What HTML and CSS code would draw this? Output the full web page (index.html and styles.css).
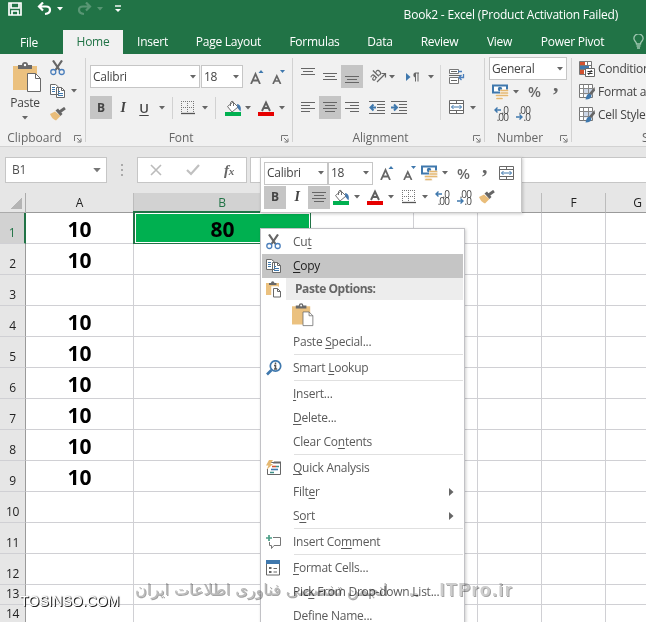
FILE: index.html
```html
<!DOCTYPE html>
<html lang="en">
<head>
<meta charset="utf-8">
<title>Book2 - Excel</title>
<link rel="stylesheet" href="styles.css">
</head>
<body>
<svg class="defs" width="0" height="0" aria-hidden="true">
  <symbol id="dd" viewBox="0 0 6 4"><path d="M0 0h6L3 3.4z" fill="currentColor"/></symbol>
  <symbol id="launch" viewBox="0 0 8 8"><path d="M.5 6V.5H7M3 3l3.5 3.5M7 3.5V7H3.5" fill="none" stroke="#777"/></symbol>
  <symbol id="paste" viewBox="0 0 29 31"><path d="M0 4h24v24H0z" fill="#ebc17f"/><path d="M5 7V3h4a3 3 0 0 1 6 0h4v4z" fill="#696969"/><circle cx="12" cy="3" r="1.2" fill="#fff"/><path d="M14.500 11.500h8l5 5v13h-13z" fill="#fff" stroke="#696969"/><path d="M22.500 11.500v5h5" fill="none" stroke="#696969"/></symbol>
  <symbol id="paste-small" viewBox="0 0 16 17"><path d="M0 2h13v12H0z" fill="#ebc17f"/><path d="M3 4V2h2a1.700 1.700 0 0 1 3.400 0h2v2z" fill="#696969"/><path d="M6.500 6.500h5l3 3v6.500h-8z" fill="#fff" stroke="#fff" stroke-width="2.500"/><path d="M7.500 7.500h4l3 3v5.500h-7z" fill="#fff" stroke="#696969"/><path d="M11.500 7.500v3h3" fill="none" stroke="#696969"/></symbol>
  <symbol id="cut" viewBox="0 0 15 16"><path d="M3 .5 9.500 10M12 .5 5.500 10" stroke="#666" stroke-width="2.200" fill="none"/><circle cx="3.300" cy="12" r="2.500" fill="none" stroke="#4a7ebb" stroke-width="1.300"/><circle cx="11.700" cy="12" r="2.500" fill="none" stroke="#4a7ebb" stroke-width="1.300"/></symbol>
  <symbol id="copy" viewBox="0 0 16 14"><path d="M.5.5h5l3 2.500v7.500h-8zM6.500 3.500h5l3 3v7h-8z" fill="#fff" stroke="#696969"/><path d="M11.500 3.500v3h3" fill="none" stroke="#696969"/><path d="M2 3.500h3M2 5.500h3M2 7.500h3M8 7.500h2M8 9.500h5M8 11.500h5" stroke="#3f78ad"/></symbol>
  <symbol id="brush" viewBox="0 0 16 14"><path d="M5 4.500 10.500 9 6 13.500Q2 12 0 7z" fill="#e9bd7a"/><path d="M5.500 3.500 8 1.500 12.500 7 10.500 9z" fill="#666"/><path d="M9.500 5 15 1" stroke="#666" stroke-width="2.800"/></symbol>
  <symbol id="grid" viewBox="0 0 14 14"><path d="M0 .5h14M0 6.500h14M.5 0v14M6.500 0v14M12.500 0v14" stroke="#777" stroke-dasharray="1 1" fill="none"/><path d="M0 12.500h14" stroke="#555" stroke-width="1.300"/></symbol>
  <symbol id="fill" viewBox="0 0 16 16"><path d="M2.500 6.500 8 2l5 5-6 5z" fill="#fff" stroke="#707070"/><path d="M5.500 6V2.500Q7 0 8.500 2v4" fill="none" stroke="#707070"/><path d="M12 4q5 1 3.500 7.500L12.500 8z" fill="#4478ad"/><path d="M0 12h16v4H0z" fill="#00b050"/></symbol>
  <symbol id="fcolor" viewBox="0 0 16 16"><path d="M4 11 8 2.500 12 11M5.500 8h5" stroke="#606060" stroke-width="1.900" fill="none"/><path d="M0 12h16v4H0z" fill="#e60000"/></symbol>
  <symbol id="alignc" viewBox="0 0 14 11"><path d="M0 .5h14M2 3.500h10M0 6.500h14M2 9.500h10" stroke="#666"/></symbol>
  <symbol id="alignl" viewBox="0 0 14 11"><path d="M0 .5h14M0 3.500h9M0 6.500h14M0 9.500h9" stroke="#666"/></symbol>
  <symbol id="alignr" viewBox="0 0 14 11"><path d="M0 .5h14M5 3.500h9M0 6.500h14M5 9.500h9" stroke="#666"/></symbol>
  <symbol id="valign" viewBox="0 0 14 8"><path d="M0 .5h14M2 3.500h10M0 6.500h14" stroke="#666"/></symbol>
  <symbol id="outdent" viewBox="0 0 16 14"><path d="M0 .5h16M8 3.500h8M8 6.500h8M8 9.500h8M0 12.500h16" stroke="#666"/><path d="M2 6.500h5M4.500 3.500l-3 3 3 3" stroke="#3f78ad" stroke-width="2" fill="none"/></symbol>
  <symbol id="indent" viewBox="0 0 16 14"><path d="M0 .5h16M8 3.500h8M8 6.500h8M8 9.500h8M0 12.500h16" stroke="#666"/><path d="M0 6.500h5M3 3.500l3 3-3 3" stroke="#3f78ad" stroke-width="2" fill="none"/></symbol>
  <symbol id="merge" viewBox="0 0 15 15"><path d="M.5.5h14v13H.5zM.5 3.500h14M.5 10.500h14M7.500.5v3M7.500 10.500V14" fill="#fff" stroke="#696969"/><path d="M2.500 7h10M4.500 5l-2 2 2 2M10.500 5l2 2-2 2" stroke="#3f78ad" fill="none"/></symbol>
  <symbol id="wrap" viewBox="0 0 16 15"><path d="M.5.5h9v4h-9zM.5 8.500h9v6h-9z" fill="#fff" stroke="#777"/><path d="M2 2.500h6M2 11.500h6M0 6.500h12" stroke="#666"/><path d="M9 2.500h4M14.500 5v3.500H10M12.500 6l-2.500 2.500L12.500 11" stroke="#4a7ebb" stroke-width="1.300" fill="none"/></symbol>
  <symbol id="money" viewBox="0 0 17 16"><path d="M1 1.500h14v7H1z" fill="#fff" stroke="#3f78ad" stroke-width="2"/><circle cx="8" cy="5" r="2.200" fill="#3f78ad"/><path d="M8 5.500h9V13H8zM3.500 10h8v6h-8z" fill="#f7f5f0"/><path d="M9 6.500h6.500M9 9h6.500M9 11.500h6.500M4.500 11.500h5.500M5 14.500h5" stroke="#e5b871" stroke-width="1.700" stroke-linecap="round"/></symbol>
  <symbol id="table" viewBox="0 0 16 16"><path d="M.5.500h13v13H.5z" fill="#fff" stroke="#777"/><path d="M4.500 4.500h9v6h-9z" fill="#cdd7e7"/><path d="M.5 4.500h13M.5 9.500h13M4.500.5v13M9.500.5v13" stroke="#888"/><path d="M15.500 3 10 9.500l2 2 4-5z" fill="#666"/><path d="M10.500 9.500q-3 0-4 6 6 0 6-4z" fill="#3f78ad"/></symbol>
  <symbol id="cond" viewBox="0 0 16 16"><path d="M.5.5h12v13H.5z" fill="#fff" stroke="#777"/><path d="M.5 4.500h12M.5 8.500h12M8.500.5v13" stroke="#777"/><path d="M1 1h5v3H1zM1 9h4v4H1z" fill="#d35230"/><path d="M1 5h9v3H1z" fill="#3f78ad"/><path d="M6.500 7.500h9v8h-9z" fill="#fff" stroke="#666"/><path d="M8.500 10.500h5M8.500 12.500h5M12.500 9l-3 5" stroke="#333"/></symbol>
  <symbol id="grow" viewBox="0 0 14 14"><path d="M1 14 5.500 4 10 14M2.800 10.500h5.500" stroke="#666" stroke-width="1.800" fill="none"/><path d="M8.500 3h5L11 0z" fill="#3f78ad"/></symbol>
  <symbol id="shrink" viewBox="0 0 14 14"><path d="M1 14 4.800 6 8.600 14M2.500 11h4.500" stroke="#666" stroke-width="1.700" fill="none"/><path d="M8 0h5l-2.500 3z" fill="#3f78ad"/></symbol>
  <symbol id="larr" viewBox="0 0 7 6"><path d="M1 3h6M3.500.5 1 3l2.500 2.500" stroke="#3f78ad" stroke-width="1.400" fill="none"/></symbol>
  <symbol id="rarr" viewBox="0 0 7 6"><path d="M0 3h6M3.500.5 6 3 3.500 5.500" stroke="#3f78ad" stroke-width="1.400" fill="none"/></symbol>
  <symbol id="undo" viewBox="0 0 15 14"><path d="M2 4.500h7q4 0 4 3.500T8 12M6 .5 2 4.500l4 4" fill="none" stroke="currentColor" stroke-width="2.200"/></symbol>
</svg>

<div class="window">
  <header class="titlebar">
    <div class="quick">
      <svg width="14" height="14" viewBox="0 0 14 14"><path d="M1 1h12v12H1zM3 1v5h8V1M4 13V9h6v4" fill="none" stroke="#fff" stroke-width="1.700"/></svg>
      <svg width="15" height="14"><use href="#undo"/></svg>
      <svg width="6" height="4"><use href="#dd"/></svg>
      <svg class="faded flip" width="15" height="14"><use href="#undo"/></svg>
      <svg class="faded" width="6" height="4"><use href="#dd"/></svg>
      <svg width="7" height="8" viewBox="0 0 7 8"><path d="M0 1h6" stroke="#fff" stroke-width="1.400"/><path d="M0 4h6L3 7z" fill="#fff"/></svg>
    </div>
    <div class="title">Book2 - Excel (Product Activation Failed)</div>
  </header>
  <nav class="tabs">
    <span class="file">File</span><span class="active">Home</span><span>Insert</span><span>Page Layout</span><span>Formulas</span><span>Data</span><span>Review</span><span>View</span><span>Power Pivot</span>
    <svg class="bulb" width="11" height="15" viewBox="0 0 11 15"><path d="M3.500 10Q3.500 8.500 2 7a4.400 4.400 0 1 1 7 0Q7.500 8.500 7.500 10zM3.500 12h4M4 14h3" fill="none" stroke="#9fc6b0" stroke-width="1.300"/></svg>
  </nav>

  <section class="ribbon">
    <div class="group clipboard">
      <div class="tools">
        <div class="paste"><svg width="29" height="31"><use href="#paste"/></svg><span>Paste</span><svg class="dd"><use href="#dd"/></svg></div>
        <div class="stack">
          <div><svg width="15" height="16"><use href="#cut"/></svg></div>
          <div><svg width="16" height="14"><use href="#copy"/></svg><svg class="dd"><use href="#dd"/></svg></div>
          <div><svg width="16" height="14"><use href="#brush"/></svg></div>
        </div>
      </div>
      <footer><span>Clipboard</span><svg class="launch"><use href="#launch"/></svg></footer>
    </div>

    <div class="group font">
      <div class="tools rows">
        <div class="font-top">
          <div class="combo"><span>Calibri</span><svg class="dd"><use href="#dd"/></svg></div>
          <div class="combo"><span>18</span><svg class="dd"><use href="#dd"/></svg></div>
          <svg width="14" height="14"><use href="#grow"/></svg>
          <svg width="14" height="14"><use href="#shrink"/></svg>
        </div>
        <div class="font-bottom">
          <b class="on">B</b><i>I</i><u>U</u><svg class="dd"><use href="#dd"/></svg><hr>
          <svg width="14" height="14"><use href="#grid"/></svg><svg class="dd"><use href="#dd"/></svg><hr>
          <svg width="16" height="16"><use href="#fill"/></svg><svg class="dd"><use href="#dd"/></svg>
          <svg width="16" height="16"><use href="#fcolor"/></svg><svg class="dd"><use href="#dd"/></svg>
        </div>
      </div>
      <footer><span>Font</span><svg class="launch"><use href="#launch"/></svg></footer>
    </div>

    <div class="group align">
      <div class="tools split">
        <div class="rows">
          <div class="align-top">
            <svg class="high" width="14" height="8"><use href="#valign"/></svg>
            <svg width="14" height="8"><use href="#valign"/></svg>
            <span class="on low"><svg width="14" height="8"><use href="#valign"/></svg></span>
            <span class="orient"><em>ab</em><svg width="11" height="11" viewBox="0 0 11 11"><path d="M1 10 9.500 1.500M5.500 1.500h4v4" fill="none" stroke="#666" stroke-width="1.200"/></svg></span>
            <svg class="dd"><use href="#dd"/></svg>
            <svg width="14" height="12" viewBox="0 0 14 12"><path d="M0 2l4.500 4L0 10z" fill="#3f78ad"/><path d="M9 6.500a2.700 2.700 0 0 1 0-5h4v1h-.5v8h-1v-8H10v8H9z" fill="#666"/></svg>
            <svg class="dd"><use href="#dd"/></svg>
          </div>
          <div class="align-bottom">
            <svg width="14" height="11"><use href="#alignl"/></svg>
            <span class="on"><svg width="14" height="11"><use href="#alignc"/></svg></span>
            <svg width="14" height="11"><use href="#alignr"/></svg>
            <svg width="16" height="14"><use href="#outdent"/></svg>
            <svg width="16" height="14"><use href="#indent"/></svg>
          </div>
        </div>
        <div class="merges">
          <div><svg width="16" height="15"><use href="#wrap"/></svg></div>
          <div><svg width="15" height="15"><use href="#merge"/></svg><svg class="dd"><use href="#dd"/></svg></div>
        </div>
      </div>
      <footer><span>Alignment</span><svg class="launch"><use href="#launch"/></svg></footer>
    </div>

    <div class="group number">
      <div class="tools">
        <div class="combo"><span>General</span><svg class="dd"><use href="#dd"/></svg></div>
        <div class="num-mid"><svg width="17" height="16"><use href="#money"/></svg><svg class="dd"><use href="#dd"/></svg><span class="pct">%</span><span class="comma">,</span></div>
        <div class="num-low">
          <span class="dec"><span><svg><use href="#larr"/></svg>.0</span><span>.00</span></span>
          <span class="dec"><span>.00</span><span><svg><use href="#rarr"/></svg>.0</span></span>
        </div>
      </div>
      <footer><span>Number</span><svg class="launch"><use href="#launch"/></svg></footer>
    </div>

    <div class="group styles">
      <div class="tools">
        <div><svg width="16" height="16"><use href="#cond"/></svg><span>Conditional</span></div>
        <div><svg width="16" height="16"><use href="#table"/></svg><span>Format as</span></div>
        <div><svg width="16" height="16"><use href="#table"/></svg><span>Cell Styles</span></div>
      </div>
      <footer><span>Styles</span></footer>
    </div>
  </section>

  <section class="formula">
    <div class="namebox"><span>B1</span><svg width="8" height="5"><use href="#dd"/></svg></div>
    <div class="dots"><i></i><i></i><i></i></div>
    <div class="fx">
      <svg width="12" height="12" viewBox="0 0 12 12"><path d="M1 1l10 10M11 1 1 11" stroke="#bbb" stroke-width="1.600"/></svg>
      <svg width="14" height="12" viewBox="0 0 14 12"><path d="M1 6l4 4 8-9" fill="none" stroke="#c0c0c0" stroke-width="2.200"/></svg>
      <span><em>f</em><small>x</small></span>
    </div>
    <div class="input"></div>
  </section>

  <main class="sheet">
    <div class="corner"></div><div class="ch">A</div><div class="ch sel">B</div><div class="ch">C</div><div class="ch">D</div><div class="ch">E</div><div class="ch">F</div><div class="ch">G</div>
    <div class="rh sel">1</div><div class="c">10</div><div class="c picked">80</div><div class="c"></div><div class="c"></div><div class="c"></div><div class="c"></div><div class="c"></div>
    <div class="rh">2</div><div class="c">10</div><div class="c"></div><div class="c"></div><div class="c"></div><div class="c"></div><div class="c"></div><div class="c"></div>
    <div class="rh">3</div><div class="c"></div><div class="c"></div><div class="c"></div><div class="c"></div><div class="c"></div><div class="c"></div><div class="c"></div>
    <div class="rh">4</div><div class="c">10</div><div class="c"></div><div class="c"></div><div class="c"></div><div class="c"></div><div class="c"></div><div class="c"></div>
    <div class="rh">5</div><div class="c">10</div><div class="c"></div><div class="c"></div><div class="c"></div><div class="c"></div><div class="c"></div><div class="c"></div>
    <div class="rh">6</div><div class="c">10</div><div class="c"></div><div class="c"></div><div class="c"></div><div class="c"></div><div class="c"></div><div class="c"></div>
    <div class="rh">7</div><div class="c">10</div><div class="c"></div><div class="c"></div><div class="c"></div><div class="c"></div><div class="c"></div><div class="c"></div>
    <div class="rh">8</div><div class="c">10</div><div class="c"></div><div class="c"></div><div class="c"></div><div class="c"></div><div class="c"></div><div class="c"></div>
    <div class="rh">9</div><div class="c">10</div><div class="c"></div><div class="c"></div><div class="c"></div><div class="c"></div><div class="c"></div><div class="c"></div>
    <div class="rh">10</div><div class="c"></div><div class="c"></div><div class="c"></div><div class="c"></div><div class="c"></div><div class="c"></div><div class="c"></div>
    <div class="rh">11</div><div class="c"></div><div class="c"></div><div class="c"></div><div class="c"></div><div class="c"></div><div class="c"></div><div class="c"></div>
    <div class="rh">12</div><div class="c"></div><div class="c"></div><div class="c"></div><div class="c"></div><div class="c"></div><div class="c"></div><div class="c"></div>
    <div class="rh">13</div><div class="c"></div><div class="c"></div><div class="c"></div><div class="c"></div><div class="c"></div><div class="c"></div><div class="c"></div>
    <div class="rh">14</div><div class="c"></div><div class="c"></div><div class="c"></div><div class="c"></div><div class="c"></div><div class="c"></div><div class="c"></div>
  </main>

  <aside class="mini">
    <div class="mini-top">
      <div class="combo"><span>Calibri</span><svg class="dd"><use href="#dd"/></svg></div>
      <div class="combo"><span>18</span><svg class="dd"><use href="#dd"/></svg></div>
      <svg width="14" height="14"><use href="#grow"/></svg><svg width="14" height="14"><use href="#shrink"/></svg>
      <svg width="17" height="16"><use href="#money"/></svg><svg class="dd"><use href="#dd"/></svg>
      <span class="pct">%</span><span class="comma">,</span><svg width="15" height="15"><use href="#merge"/></svg>
    </div>
    <div class="mini-bottom">
      <b class="on">B</b><i>I</i><span class="on"><svg width="14" height="11"><use href="#alignc"/></svg></span>
      <svg width="16" height="16"><use href="#fill"/></svg><svg class="dd"><use href="#dd"/></svg>
      <svg width="16" height="16"><use href="#fcolor"/></svg><svg class="dd"><use href="#dd"/></svg>
      <svg width="14" height="14"><use href="#grid"/></svg><svg class="dd"><use href="#dd"/></svg>
      <span class="dec"><span><svg><use href="#larr"/></svg>.0</span><span>.00</span></span>
      <span class="dec"><span>.00</span><span><svg><use href="#rarr"/></svg>.0</span></span>
      <svg width="16" height="14"><use href="#brush"/></svg>
    </div>
  </aside>

  <ul class="menu">
    <li><svg width="15" height="16"><use href="#cut"/></svg><span>Cu<u>t</u></span></li>
    <li class="hover"><svg width="16" height="14"><use href="#copy"/></svg><span><u>C</u>opy</span></li>
    <li class="head"><svg width="16" height="17"><use href="#paste-small"/></svg><span>Paste Options:</span></li>
    <li class="option"><i></i><svg width="22" height="24"><use href="#paste"/></svg></li>
    <li><i></i><span>Paste <u>S</u>pecial...</span></li>
    <li class="sep"></li>
    <li><svg width="16" height="16" viewBox="0 0 16 16"><circle cx="9.500" cy="6" r="5.200" fill="#fff" stroke="#3f78ad" stroke-width="1.700"/><path d="M5.500 10 1 14.500" stroke="#3f78ad" stroke-width="2.600"/><path d="M9.500 2.500v1.700M8 5.500h1.500V9M8 9h3.200" stroke="#555" stroke-width="1.500" fill="none"/></svg><span>Smart <u>L</u>ookup</span></li>
    <li class="sep"></li>
    <li><i></i><span><u>I</u>nsert...</span></li>
    <li><i></i><span><u>D</u>elete...</span></li>
    <li><i></i><span>Clear Co<u>n</u>tents</span></li>
    <li class="sep"></li>
    <li><svg width="16" height="16" viewBox="0 0 16 16"><path d="M4.500 2.500h10v12h-13V9" fill="#fff" stroke="#666"/><path d="M8 1.500h7v2H7z" fill="#666"/><path d="M6 6.500h4" stroke="#d35230" stroke-width="1.600"/><path d="M10 6.500h3M4 12.500h4" stroke="#3f8f87" stroke-width="1.600"/><path d="M5 9.500h7" stroke="#3f78ad" stroke-width="1.600"/><path d="M3 0h4L4.500 4H7L.5 10l2-4.500H0z" fill="#e5b871"/></svg><span><u>Q</u>uick Analysis</span></li>
    <li><i></i><span>Filt<u>e</u>r</span><svg class="sub" width="5" height="8" viewBox="0 0 5 8"><path d="M0 0l4.500 4L0 8z" fill="#666"/></svg></li>
    <li><i></i><span>S<u>o</u>rt</span><svg class="sub" width="5" height="8" viewBox="0 0 5 8"><path d="M0 0l4.500 4L0 8z" fill="#666"/></svg></li>
    <li class="sep"></li>
    <li><svg width="16" height="15" viewBox="0 0 16 15"><path d="M7 2.500h7.500v8H8L5.500 13.500v-3h-2V7" fill="#fff" stroke="#777"/><path d="M0 3h6M3 0v6" stroke="#4b9e86" stroke-width="1.700"/></svg><span>Insert Co<u>m</u>ment</span></li>
    <li class="sep"></li>
    <li><svg width="15" height="16" viewBox="0 0 15 16"><path d="M.5.5h13v14.500H.5z" fill="#fff" stroke="#666"/><path d="M0 0h14v4H0z" fill="#3f78ad"/><path d="M3 7h2.500v2H3zM3 11h2.500v2H3z" fill="#666"/><path d="M7.500 8.500H11M7.500 12H11" stroke="#666"/></svg><span><u>F</u>ormat Cells...</span></li>
    <li><i></i><span>Pic<u>k</u> From Drop-down List...</span></li>
    <li><i></i><span>Define N<u>a</u>me...</span></li>
  </ul>

  <div class="mark-site">TOSINSO.COM</div>
  <div class="mark-forum"><span class="persian" dir="rtl">انجمن تخصصی فناوری اطلاعات ایران</span><span>..</span><span class="brand">ITPro.ir</span></div>
</div>
</body>
</html>
```
FILE: styles.css
```css
* { box-sizing: border-box; }
body { margin: 0; font: 12px/16px "Open Sans", "Noto Sans", sans-serif; color: #444; letter-spacing: -.25px; }
svg { display: block; flex: none; }
.window { position: relative; width: 646px; height: 622px; overflow: hidden; background: #e6e6e6; }
.defs { position: absolute; }

.titlebar { height: 30px; background: #217346; color: #fff; display: flex; justify-content: space-between; padding-right: 28px; }
.quick { display: grid; grid-template-columns: 29px 20px 20px 20px 18px 10px; align-items: center; height: 18px; padding-left: 8px; }
.faded { opacity: .25; }
.flip { transform: scaleX(-1); }
.title { padding-top: 7px; white-space: nowrap; letter-spacing: -.2px; }

.tabs { height: 24px; background: #217346; color: #fff; display: grid; grid-template-columns: 63px 60px 59px 93px 79px 52px 67px 53px 93px 27px; line-height: 24px; text-align: center; white-space: nowrap; }
.tabs .file { padding: 1px 5px 0 0; }
.tabs .active { background: #f1f1f1; color: #217346; }
.bulb { margin: 4px 0 0 14px; }

.ribbon { height: 93px; display: flex; background: #f1f1f1; border-bottom: 1px solid #d2d2d2; overflow: hidden; }
.group { flex: none; display: flex; flex-direction: column; background: linear-gradient(#d2d2d2, #d2d2d2) right 4px / 1px 84px no-repeat; }
.tools { height: 76px; }
.group footer { display: grid; grid-template-columns: 1fr 8px; height: 16px; color: #666; text-align: center; padding-right: 4px; white-space: nowrap; letter-spacing: -.1px; }
.group footer span { padding-right: 5px; }
.launch { width: 8px; height: 8px; margin-top: 5px; }
.dd { width: 6px; height: 4px; color: #666; }
.clipboard { width: 86px; }
.font { width: 207px; }
.align { width: 192px; }
.number { width: 87px; }
.styles { width: 120px; background: none; }
.on { background: #c5c5c5; display: flex; align-items: center; justify-content: center; width: 22px; height: 23px; }

.clipboard .tools { display: flex; }
.clipboard footer { letter-spacing: 0; }
.paste { width: 50px; display: flex; flex-direction: column; align-items: center; padding-top: 8px; }
.paste svg:first-child { margin-left: 4px; }
.paste span { padding: 2px 0 5px; }
.stack { padding-top: 2px; }
.stack div { display: flex; align-items: center; gap: 5px; height: 23px; }

.combo { display: flex; align-items: center; justify-content: space-between; background: #fff; border: 1px solid #c6c6c6; height: 23px; padding: 0 3px 0 2px; }
.rows > div { display: grid; height: 23px; align-items: center; }
.font .rows { padding: 11px 0 0 4px; }
.rows > div + div { margin-top: 8px; }
.font .font-top { grid-template-columns: 110px 43px 22px 20px; }
.font-top .combo + .combo { margin-left: 1px; }
.font-top > svg { margin-left: 7px; }
.font-bottom { grid-template-columns: 22px 22px 20px 18px 9px 21px 13px 10px 20px 13px 21px 10px; }
.font-bottom i, .mini-bottom i { font: italic bold 14px "Liberation Serif", serif; text-align: center; }
.font-bottom b, .mini-bottom b { font-size: 12px; font-weight: 700; }
.font-bottom u { font-size: 13px; font-weight: 600; text-align: center; }
.font-bottom .dd { margin-left: 5px; }
.font-bottom .dd ~ .dd { margin-left: 0; justify-self: start; }
.font-bottom hr { width: 1px; height: 22px; margin: 0; border: 0; background: #d2d2d2; }

.split { display: flex; padding-top: 11px; }
.split .rows { width: 148px; border-right: 1px solid #d8d8d8; height: 55px; }
.align-top { grid-template-columns: 22px 18px 28px 20px 17px 22px 10px; }
.align-bottom { grid-template-columns: 18px 26px 24px 22px 20px; }
.split .rows > div { padding-left: 8px; }
.align-top .high { align-self: start; margin-top: 3px; }
.low { align-items: flex-end; padding-bottom: 4px; }
.orient { display: flex; align-items: flex-end; }
.orient em { font: 600 11px/12px "Open Sans", sans-serif; color: #666; transform: translate(0, -2px) rotate(-45deg); width: 11px; }
.orient svg { margin-left: -4px; }
.merges { padding-left: 8px; }
.merges div { display: flex; align-items: center; height: 23px; gap: 6px; }
.merges div + div { margin-top: 8px; }

.number .tools { padding: 3px 4px 0; }
.number .combo { width: 78px; }
.num-mid { display: grid; grid-template-columns: 21px 15px 25px 10px; align-items: center; padding-left: 3px; height: 23px; }
.pct { font-size: 15px; font-weight: 600; color: #666; }
.num-mid .pct { margin-top: -2px; }
.comma { font: bold 22px/10px "Liberation Serif", serif; color: #666; margin-top: -15px; }
.num-low { display: flex; gap: 6px; padding: 3px 0 0 3px; }
.dec { width: 16px; font: 10px/8px "Open Sans", sans-serif; letter-spacing: -.9px; color: #444; }
.dec > span { display: flex; justify-content: flex-end; align-items: center; height: 7px; }
.dec svg { width: 7px; height: 6px; }

.styles .tools { padding: 3px 0 0 7px; }
.styles .tools div { display: flex; align-items: center; gap: 3px; height: 23px; white-space: nowrap; }
.styles footer { padding-left: 70px; text-align: left; }

.formula { height: 46px; display: flex; padding: 10px 0 10px 5px; }
.namebox, .fx, .input { background: #fff; border: 1px solid #c6c6c6; height: 26px; display: flex; align-items: center; }
.namebox { width: 102px; justify-content: space-between; padding: 0 5px 0 6px; color: #505050; }
.namebox svg { color: #777; }
.dots { width: 30px; display: flex; flex-direction: column; align-items: center; gap: 3px; padding-top: 7px; }
.dots i { width: 2px; height: 2px; background: #aaa; }
.fx { width: 110px; justify-content: space-between; padding: 0 12px; margin-right: 3px; }
.fx span { font-family: "Liberation Serif", serif; font-weight: bold; color: #666; font-size: 15px; }
.fx small { font-size: 11px; font-style: italic; }
.input { flex: 1; border-right: 0; }

.sheet { display: grid; grid-template-columns: 26px 108px 177px 103px 64px 64px 64px 64px; grid-template-rows: 20px repeat(12, 31px) 20px 20px; }
.sheet > div { border-right: 1px solid #d0d0d4; border-bottom: 1px solid #d0d0d4; background: #fff; }
.sheet .corner { background: linear-gradient(135deg, transparent 50%, #b4b4b4 50%) 11px 4px / 11px 12px no-repeat #e6e6e6; border-color: #ababab; }
.sheet .ch { background: #e6e6e6; border-bottom-color: #9a9a9a; border-right-color: #bcbcbc; color: #222; text-align: center; line-height: 19px; }
.sheet .rh { background: #e6e6e6; border-right-color: #9a9a9a; color: #222; display: flex; justify-content: center; align-items: flex-end; line-height: 20px; }
.sheet .ch.sel { background: #d2d2d2; color: #217346; }
.sheet .rh.sel { background: #d2d2d2; color: #217346; border-right: 2px solid #217346; }
.c { font-size: 21px; font-weight: 700; color: #000; text-align: center; line-height: 32px; letter-spacing: 0; }
.sheet .picked { background: #00b050; border: 1px solid #fff; outline: 2px solid #217346; margin: 0 1px 1px; line-height: 30px; }

.mini { position: absolute; left: 260px; top: 157px; width: 262px; height: 56px; background: #fff; border: 1px solid #c6c6c6; padding: 3px; box-shadow: 1px 1px 3px rgba(0,0,0,.2); }
.mini-top, .mini-bottom { display: grid; align-items: center; height: 24px; }
.mini-top { grid-template-columns: 64px 52px 23px 18px 21px 15px 25px 17px 16px; }
.mini-top .combo:first-child { width: 64px; }
.mini-top .combo + .combo { width: 45px; }
.mini-bottom { grid-template-columns: 22px 22px 25px 21px 13px 21px 14px 20px 13px 22px 22px 16px; }
.mini-bottom .dec { margin-left: -2px; }

.menu { position: absolute; left: 260px; top: 228px; width: 205px; height: 410px; margin: 0; padding: 1px; list-style: none; background: #fff; border: 1px solid #c2c2c6; box-shadow: 1px 1px 3px rgba(0,0,0,.2); color: #5a5a5a; }
.menu li { height: 24px; display: grid; grid-template-columns: 27px 1fr 14px; align-items: center; padding-left: 4px; white-space: nowrap; }
.menu .hover { background: #c5c5c5; color: #222; }
.menu .head { height: 22px; background: linear-gradient(#ededed, #ededed) 24px 0 / 177px 22px no-repeat; font-weight: 700; color: #666; letter-spacing: -.45px; }
.head span { padding-left: 2px; }
.menu .option { height: 30px; }
.option svg { margin-left: -1px; }
.menu .sep { height: 2px; padding: 0; background: linear-gradient(#e0e0e0, #e0e0e0) 32px 0 / 169px 1px no-repeat; }
.menu u, .font-bottom u { text-underline-offset: 2px; }

.mark-site { position: absolute; left: 20px; top: 592px; font: 14px/18px "Liberation Sans", sans-serif; color: #fff; letter-spacing: 0; text-shadow: 1px 1px 0 #222, 1px 0 1px #777; }
.mark-forum { position: absolute; left: 135px; top: 578px; width: 378px; display: flex; justify-content: space-between; font: bold 18px/24px "Liberation Sans", sans-serif; color: #cdcdcd; white-space: nowrap; text-shadow: 1px 1px 0 #a4a4a4; mix-blend-mode: multiply; }
.persian { font: 16px/24px "DejaVu Sans", sans-serif; letter-spacing: 0; color: #bbb; }
.brand { letter-spacing: 1.3px; }
```
